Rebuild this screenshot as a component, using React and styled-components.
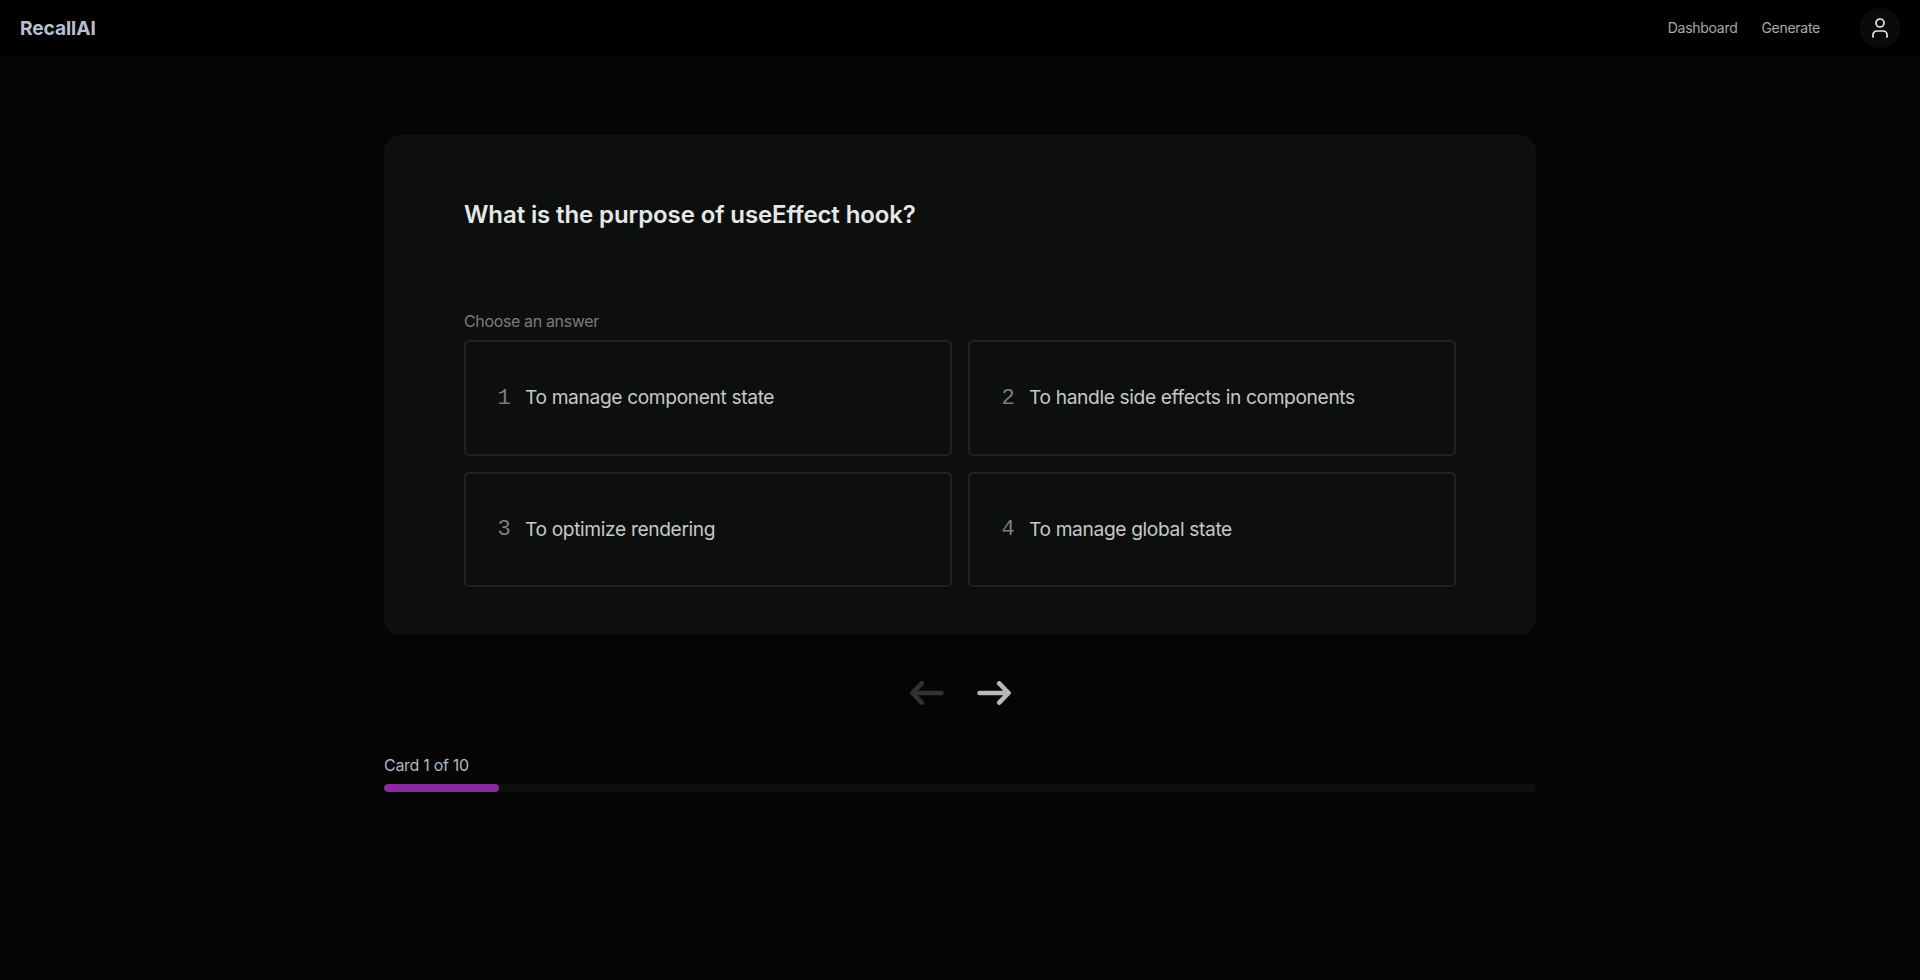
import React from 'react';
import styled, { createGlobalStyle } from 'styled-components';
import { User } from 'lucide-react';

const GlobalStyle = createGlobalStyle`
  *, *::before, *::after { box-sizing: border-box; }
  body {
    margin: 0;
    background: #050505;
    color: #cbcecb;
    font-family: Inter, "Liberation Sans", sans-serif;
    font-size: 16px;
    line-height: 24px;
  }
  button { font: inherit; color: inherit; background: none; border: 0; padding: 0; margin: 0; }
`;

const Header = styled.header`
  display: flex;
  align-items: center;
  height: 55px;
  padding: 0 20px;
  background: #000;
`;

const Brand = styled.span`
  font-size: 19.2px;
  font-weight: 700;
  letter-spacing: -0.1px;
  color: #b6bfcf;
`;

const Nav = styled.nav`
  display: flex;
  gap: 24px;
  margin-left: auto;
  margin-right: 40px;
`;

const NavLink = styled.a`
  font-size: 14px;
  letter-spacing: -0.28px;
  color: #a9aba9;
`;

const Avatar = styled.button`
  display: flex;
  align-items: center;
  justify-content: center;
  width: 40px;
  height: 40px;
  margin-top: 1px;
  border-radius: 50%;
  background: #090b0a;
  color: #e4e8e4;
`;

const Main = styled.main`
  width: 60%;
  margin: 80px auto 0;
`;

const Card = styled.section`
  height: 500px;
  padding: 64px 80px 48px;
  border-radius: 16px;
  background: #0d0f0e;
`;

const Question = styled.h1`
  margin: 0;
  font-size: 24px;
  line-height: 32px;
  font-weight: 600;
  letter-spacing: -0.11px;
  color: #e6e8e6;
`;

const Hint = styled.p`
  margin: 78px 0 7px;
  letter-spacing: -0.36px;
  color: #7b7d7b;
`;

const Options = styled.div`
  display: grid;
  grid-template-columns: 1fr 1fr;
  grid-auto-rows: 115.5px;
  gap: 16px;
`;

const Option = styled.button`
  display: flex;
  align-items: center;
  gap: 15px;
  padding: 0 32px 1px;
  border: 2px solid #202221;
  border-radius: 5px;
  font-size: 19.2px;
  letter-spacing: -0.37px;
  color: #c6c9c6;
`;

const OptionNumber = styled.span`
  width: 12px;
  padding-top: 3px;
  font-family: "Liberation Mono", monospace;
  font-size: 22px;
  letter-spacing: 0;
  text-indent: -0.5px;
  color: #7b7d7b;
`;

const Pager = styled.div`
  display: flex;
  justify-content: center;
  gap: 33px;
  margin-top: 46px;
`;

const PagerButton = styled.button`
  display: flex;
  color: ${(p) => (p.disabled ? '#323232' : '#b9b9b9')};
`;

const Arrow = styled.svg`
  display: block;
  width: 34px;
  height: 24px;
  fill: none;
  stroke: currentColor;
  stroke-width: 4.6;
  stroke-linecap: round;
  stroke-linejoin: round;
`;

const Progress = styled.div`
  margin-top: 48px;
`;

const ProgressLabel = styled.div`
  margin-bottom: 7px;
  letter-spacing: -0.3px;
  color: #b0b8c6;
`;

const Track = styled.div`
  height: 8px;
  border-radius: 4px;
  background: #0d0f0e;
  overflow: hidden;
`;

const Fill = styled.div`
  height: 100%;
  border-radius: 4px;
  background: #8a2aa2;
`;

const answers = [
  'To manage component state',
  'To handle side effects in components',
  'To optimize rendering',
  'To manage global state',
];
const current = 1;
const total = 10;

export default function App() {
  return (
    <>
      <GlobalStyle />
      <Header>
        <Brand>RecallAI</Brand>
        <Nav>
          <NavLink>Dashboard</NavLink>
          <NavLink>Generate</NavLink>
        </Nav>
        <Avatar aria-label="Account">
          <User size={24} strokeWidth={1.7} />
        </Avatar>
      </Header>
      <Main>
        <Card>
          <Question>What is the purpose of useEffect hook?</Question>
          <Hint>Choose an answer</Hint>
          <Options>
            {answers.map((answer, i) => (
              <Option key={answer}>
                <OptionNumber>{i + 1}</OptionNumber>
                {answer}
              </Option>
            ))}
          </Options>
        </Card>
        <Pager>
          <PagerButton disabled aria-label="Previous card">
            <Arrow viewBox="0 0 34 24">
              <path d="M31.4 12H2.6M11.8 2.4L2.4 12L11.8 21.6" />
            </Arrow>
          </PagerButton>
          <PagerButton aria-label="Next card">
            <Arrow viewBox="0 0 34 24">
              <path d="M2.6 12H31.4M22.2 2.4L31.6 12L22.2 21.6" />
            </Arrow>
          </PagerButton>
        </Pager>
        <Progress>
          <ProgressLabel>Card {current} of {total}</ProgressLabel>
          <Track>
            <Fill style={{ width: `${(current / total) * 100}%` }} />
          </Track>
        </Progress>
      </Main>
    </>
  );
}
